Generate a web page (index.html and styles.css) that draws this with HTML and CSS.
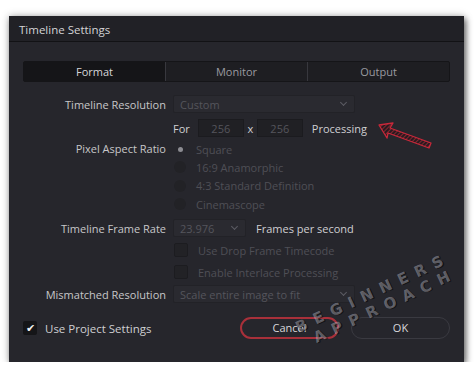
FILE: index.html
```html
<!DOCTYPE html>
<html lang="en">
<head>
  <meta charset="UTF-8" />
  <title>Timeline Settings</title>
  <link rel="stylesheet" href="styles.css">
</head>
<body>

  <div class="dialog">
    <div class="titlebar">Timeline Settings</div>

    <div class="content">
      <div class="tabs">
        <div class="tab active">Format</div>
        <div class="tab">Monitor</div>
        <div class="tab">Output</div>
      </div>

      <div class="form">
        <div class="row r-res">
          <div class="label">Timeline Resolution</div>
          <div class="select wide"><span>Custom</span><i class="chev"></i></div>
        </div>

        <div class="row r-for">
          <div class="label"></div>
          <div class="ctrl">
            <span class="txt">For</span>
            <span class="input">256</span>
            <span class="x">x</span>
            <span class="input">256</span>
            <span class="txt proc">Processing</span>
          </div>
        </div>

        <div class="row r-par">
          <div class="label">Pixel Aspect Ratio</div>
          <div class="radios">
            <div class="radio on"><i></i>Square</div>
            <div class="radio"><i></i>16:9 Anamorphic</div>
            <div class="radio"><i></i>4:3 Standard Definition</div>
            <div class="radio"><i></i>Cinemascope</div>
          </div>
        </div>

        <div class="row r-fps">
          <div class="label">Timeline Frame Rate</div>
          <div class="ctrl">
            <div class="select small"><span>23.976</span><i class="chev"></i></div>
            <span class="txt fps">Frames per second</span>
          </div>
        </div>

        <div class="row r-chk">
          <div class="label"></div>
          <div class="check"><i></i>Use Drop Frame Timecode</div>
        </div>
        <div class="row r-chk">
          <div class="label"></div>
          <div class="check"><i></i>Enable Interlace Processing</div>
        </div>

        <div class="row r-mis">
          <div class="label">Mismatched Resolution</div>
          <div class="select wide"><span>Scale entire image to fit</span><i class="chev"></i></div>
        </div>
      </div>

      <div class="footer">
        <div class="project"><i class="tick">&#10004;</i>Use Project Settings</div>
        <div class="buttons">
          <div class="btn cancel">Cancel</div>
          <div class="btn">OK</div>
        </div>
      </div>
    </div>

    <!-- annotation overlays -->
    <svg class="arrow" width="70" height="34" viewBox="0 0 70 34">
      <defs>
        <pattern id="hatch" width="3" height="3" patternUnits="userSpaceOnUse" patternTransform="rotate(45)">
          <rect width="3" height="3" fill="#2a1a20"/>
          <line x1="0" y1="0" x2="0" y2="3" stroke="#c0303a" stroke-width="1.2"/>
        </pattern>
      </defs>
      <polygon points="2,4 16,2 13,7 54,22 52,27 11,12 10,17" fill="url(#hatch)" stroke="#c8283a" stroke-width="1.3" stroke-linejoin="round"/>
    </svg>

    <div class="watermark">
      <div class="wm1">BEGINNERS</div>
      <div class="wm2">APPROACH</div>
    </div>
  </div>

</body>
</html>
```

FILE: styles.css
```css
html, body {
  margin: 0;
  padding: 0;
  background: #fff;
  font-family: 'Open Sans', 'Noto Sans', sans-serif;
  font-size: 11px;
  overflow: hidden;
}

.dialog {
  position: relative;
  width: 455px;
  height: 346px;
  margin: 16px 0 0 9px;
  background: #26262c;
  box-shadow: 2px 3px 6px rgba(0, 0, 0, 0.55), 0 0 8px rgba(0, 0, 0, 0.25);
  color: #c9c9cc;
}

.titlebar {
  height: 25px;
  line-height: 27px;
  padding-left: 10px;
  background: #212126;
  border-bottom: 1px solid #121215;
  color: #d4d4d6;
  font-size: 11.5px;
}

.content {
  padding: 19px 14px 0 14px;
}

.tabs {
  display: flex;
  height: 19px;
  background: #1e1e22;
  border: 1px solid #151518;
  border-radius: 2px;
}
.tab {
  flex: 1;
  text-align: center;
  line-height: 19px;
  color: #9a9aa0;
  border-left: 1px solid #38383e;
}
.tab:first-child { border-left: none; }
.tab.active {
  background: #151518;
  color: #d6d6d9;
}

.form {
  margin-top: 13px;
}
.row {
  display: grid;
  grid-template-columns: 143px 1fr;
  column-gap: 7px;
  align-items: center;
}
.label {
  text-align: right;
  color: #c6c6c9;
}
.r-for { margin-top: 6px; }
.r-par { margin-top: 3px; align-items: start; }
.r-par .label { line-height: 18px; }
.r-fps { margin-top: 6px; }
.r-chk { height: 22px; }
.r-fps + .r-chk { margin-top: 2px; }
.r-mis { margin-top: 2px; }

.select {
  display: flex;
  align-items: center;
  justify-content: space-between;
  height: 18px;
  padding: 0 8px 0 6px;
  background: #2a2a30;
  border: 1px solid #222227;
  border-radius: 2px;
  color: #55555c;
  box-sizing: border-box;
}
.select.wide { width: 182px; }
.select.small { width: 73px; }
.chev {
  width: 4px;
  height: 4px;
  border-right: 1px solid #5c5c63;
  border-bottom: 1px solid #5c5c63;
  transform: rotate(45deg);
  margin-top: -3px;
}

.ctrl {
  display: flex;
  align-items: center;
}
.txt { color: #cfcfd2; }
.input {
  width: 46px;
  height: 18px;
  line-height: 18px;
  margin-left: 8px;
  text-align: center;
  background: #202024;
  border: 1px solid #1b1b1f;
  box-sizing: border-box;
  color: #55555c;
}
.x {
  width: 13px;
  text-align: center;
  color: #cfcfd2;
}
.x + .input { margin-left: 0; }
.proc { margin-left: 9px; }
.fps { margin-left: 10px; }

.radios { display: flex; flex-direction: column; }
.radio {
  display: flex;
  align-items: center;
  height: 18.3px;
  color: #4f4f56;
}
.radio i {
  width: 12px;
  height: 12px;
  border-radius: 50%;
  background: #222226;
  margin: 0 10px 0 1px;
  position: relative;
}
.radio.on i { background: transparent; }
.radio.on i::after {
  content: '';
  position: absolute;
  left: 4px;
  top: 4px;
  width: 5px;
  height: 5px;
  border-radius: 50%;
  background: #8c8c92;
}

.check {
  display: flex;
  align-items: center;
  color: #4f4f56;
}
.check i {
  width: 14px;
  height: 14px;
  background: #222226;
  border: 1px solid #1c1c20;
  border-radius: 2px;
  margin: 0 10px 0 1px;
  box-sizing: border-box;
}

.footer {
  display: flex;
  justify-content: space-between;
  align-items: center;
  margin-top: 14px;
}
.project {
  display: flex;
  align-items: center;
  color: #cfcfd2;
  font-size: 11.5px;
}
.tick {
  width: 14px;
  height: 14px;
  background: #151518;
  border-radius: 2px;
  color: #f2f2f2;
  font-style: normal;
  font-size: 11px;
  line-height: 14px;
  text-align: center;
  margin-right: 8px;
}
.buttons {
  display: flex;
  gap: 12px;
}
.btn {
  width: 97px;
  height: 20px;
  line-height: 20px;
  text-align: center;
  border: 1px solid #3a3a41;
  border-radius: 11px;
  color: #d8d8db;
}
.btn.cancel {
  border: 2px solid #a8303a;
  width: 95px;
  height: 18px;
  line-height: 18px;
}

.arrow {
  position: absolute;
  left: 368px;
  top: 105px;
}

.watermark {
  position: absolute;
  left: 284px;
  top: 305px;
  transform: rotate(-25deg);
  transform-origin: left top;
  font-family: 'DejaVu Sans', sans-serif;
  font-weight: bold;
  font-size: 15px;
  line-height: 17px;
  letter-spacing: 8px;
  color: rgba(210, 210, 222, 0.4);
  text-shadow: 1px 1px 0 rgba(0, 0, 0, 0.5);
  white-space: nowrap;
  pointer-events: none;
}
.wm2 { margin-left: 12px; }
```
